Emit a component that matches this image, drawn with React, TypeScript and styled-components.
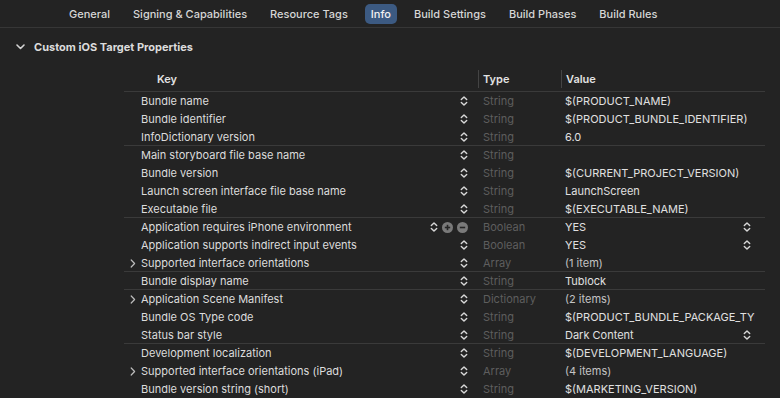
import React from "react";
import styled, { createGlobalStyle } from "styled-components";

const Global = createGlobalStyle`
  html, body { margin: 0; padding: 0; background: #232323; }
  body { font-family: Inter, "Noto Sans", sans-serif; -webkit-font-smoothing: antialiased; }
`;

const Page = styled.div`
  width: 780px;
  height: 398px;
  background: #232323;
  overflow: hidden;
  color: #dedede;
`;

const TabBar = styled.div`
  height: 28px;
  border-bottom: 1px solid #363636;
  display: flex;
  align-items: center;
  gap: 11px;
  padding-left: 63px;
  box-sizing: border-box;
`;

const Tab = styled.div<{ $active?: boolean }>`
  font-size: 11px;
  font-weight: 500;
  line-height: 20px;
  padding: 0 6px;
  border-radius: 5px;
  color: ${(p) => (p.$active ? "#f2f2f2" : "#d6d6d6")};
  background: ${(p) => (p.$active ? "#3c5a82" : "transparent")};
`;

const SectionHeader = styled.div`
  display: flex;
  align-items: center;
  height: 20px;
  margin-top: 9px;
  padding-left: 16px;
  gap: 9px;
  font-size: 11px;
  font-weight: 700;
  color: #dcdcdc;
`;

const Table = styled.div`
  margin-left: 124px;
  width: 641px;
  margin-top: 9px;
`;

const HeaderRow = styled.div`
  display: grid;
  grid-template-columns: 354px 83px 204px;
  height: 26px;
  align-items: center;
  border-bottom: 1px solid #3a3a3a;
  box-sizing: border-box;
  font-size: 11px;
  font-weight: 600;
  color: #e2e2e2;
`;

const HeadCell = styled.div<{ $pad: number; $sep?: boolean }>`
  padding-left: ${(p) => p.$pad}px;
  height: 18px;
  line-height: 18px;
  border-left: ${(p) => (p.$sep ? "1px solid #444" : "none")};
  box-sizing: border-box;
`;

const Row = styled.div<{ $line?: boolean }>`
  display: grid;
  grid-template-columns: 354px 83px 204px;
  height: 18px;
  align-items: center;
  font-size: 11px;
  box-sizing: border-box;
  border-bottom: ${(p) => (p.$line ? "1px solid #3a3a3a" : "none")};
`;

const KeyCell = styled.div`
  position: relative;
  display: flex;
  align-items: center;
  height: 18px;
  padding-left: 17px;
  padding-right: 10px;
  color: #dcdcdc;
`;

const KeyText = styled.span`
  flex: 1;
  white-space: nowrap;
  overflow: hidden;
`;

const Disclosure = styled.span`
  position: absolute;
  left: 6px;
  top: 0;
  height: 18px;
  display: flex;
  align-items: center;
`;

const Controls = styled.span`
  display: flex;
  align-items: center;
  gap: 4px;
`;

const TypeCell = styled.div`
  padding-left: 5px;
  color: #5e5e5e;
  white-space: nowrap;
`;

const ValueCell = styled.div<{ $dim?: boolean }>`
  display: flex;
  align-items: center;
  padding-left: 4px;
  padding-right: 10px;
  color: ${(p) => (p.$dim ? "#c4c4c4" : "#e0e0e0")};
  overflow: hidden;
`;

const ValueText = styled.span`
  flex: 1;
  white-space: nowrap;
  overflow: hidden;
`;

const ValueStepper = styled.span`
  margin-right: 4px;
  display: flex;
`;

const Stepper = ({ color = "#d8d8d8" }: { color?: string }) => (
  <svg width="8" height="12" viewBox="0 0 8 12" style={{ display: "block" }}>
    <path d="M1.3 4.6 L4 1.9 L6.7 4.6" fill="none" stroke={color} strokeWidth="1.4" strokeLinecap="round" strokeLinejoin="round" />
    <path d="M1.3 7.4 L4 10.1 L6.7 7.4" fill="none" stroke={color} strokeWidth="1.4" strokeLinecap="round" strokeLinejoin="round" />
  </svg>
);

const Circle = ({ kind }: { kind: "plus" | "minus" }) => (
  <svg width="11" height="11" viewBox="0 0 11 11" style={{ display: "block" }}>
    <circle cx="5.5" cy="5.5" r="5.5" fill="#7a7a7a" />
    <path d="M2.8 5.5 H8.2" stroke="#262626" strokeWidth="1.6" />
    {kind === "plus" && <path d="M5.5 2.8 V8.2" stroke="#262626" strokeWidth="1.6" />}
  </svg>
);

const Chevron = ({ dir }: { dir: "down" | "right" }) =>
  dir === "down" ? (
    <svg width="9" height="6" viewBox="0 0 9 6" style={{ display: "block" }}>
      <path d="M1 1 L4.5 4.5 L8 1" fill="none" stroke="#d4d4d4" strokeWidth="1.6" strokeLinecap="round" strokeLinejoin="round" />
    </svg>
  ) : (
    <svg width="6" height="9" viewBox="0 0 6 9" style={{ display: "block" }}>
      <path d="M1.2 1 L4.6 4.5 L1.2 8" fill="none" stroke="#bdbdbd" strokeWidth="1.2" strokeLinecap="round" strokeLinejoin="round" />
    </svg>
  );

type Item = {
  key: string;
  type: string;
  value: string;
  line?: boolean;
  expand?: boolean;
  hover?: boolean;
  valueStepper?: boolean;
  dim?: boolean;
};

const items: Item[] = [
  { key: "Bundle name", type: "String", value: "$(PRODUCT_NAME)" },
  { key: "Bundle identifier", type: "String", value: "$(PRODUCT_BUNDLE_IDENTIFIER)" },
  { key: "InfoDictionary version", type: "String", value: "6.0", line: true },
  { key: "Main storyboard file base name", type: "String", value: "" },
  { key: "Bundle version", type: "String", value: "$(CURRENT_PROJECT_VERSION)" },
  { key: "Launch screen interface file base name", type: "String", value: "LaunchScreen" },
  { key: "Executable file", type: "String", value: "$(EXECUTABLE_NAME)", line: true },
  { key: "Application requires iPhone environment", type: "Boolean", value: "YES", hover: true, valueStepper: true },
  { key: "Application supports indirect input events", type: "Boolean", value: "YES", valueStepper: true },
  { key: "Supported interface orientations", type: "Array", value: "(1 item)", expand: true, line: true, dim: true },
  { key: "Bundle display name", type: "String", value: "Tublock", line: true },
  { key: "Application Scene Manifest", type: "Dictionary", value: "(2 items)", expand: true, dim: true },
  { key: "Bundle OS Type code", type: "String", value: "$(PRODUCT_BUNDLE_PACKAGE_TYPE)" },
  { key: "Status bar style", type: "String", value: "Dark Content", valueStepper: true, line: true },
  { key: "Development localization", type: "String", value: "$(DEVELOPMENT_LANGUAGE)" },
  { key: "Supported interface orientations (iPad)", type: "Array", value: "(4 items)", expand: true, dim: true },
  { key: "Bundle version string (short)", type: "String", value: "$(MARKETING_VERSION)" },
];

const tabs = ["General", "Signing & Capabilities", "Resource Tags", "Info", "Build Settings", "Build Phases", "Build Rules"];

export default function App() {
  return (
    <Page>
      <Global />
      <TabBar>
        {tabs.map((t) => (
          <Tab key={t} $active={t === "Info"}>
            {t}
          </Tab>
        ))}
      </TabBar>
      <SectionHeader>
        <Chevron dir="down" />
        <span>Custom iOS Target Properties</span>
      </SectionHeader>
      <Table>
        <HeaderRow>
          <HeadCell $pad={33}>Key</HeadCell>
          <HeadCell $pad={4} $sep>Type</HeadCell>
          <HeadCell $pad={4} $sep>Value</HeadCell>
        </HeaderRow>
        {items.map((it) => (
          <Row key={it.key} $line={it.line}>
            <KeyCell>
              {it.expand && (
                <Disclosure>
                  <Chevron dir="right" />
                </Disclosure>
              )}
              <KeyText>{it.key}</KeyText>
              <Controls>
                <Stepper />
                {it.hover && <Circle kind="plus" />}
                {it.hover && <Circle kind="minus" />}
              </Controls>
            </KeyCell>
            <TypeCell>{it.type}</TypeCell>
            <ValueCell $dim={it.dim}>
              <ValueText>{it.value}</ValueText>
              {it.valueStepper && (
                <ValueStepper>
                  <Stepper />
                </ValueStepper>
              )}
            </ValueCell>
          </Row>
        ))}
      </Table>
    </Page>
  );
}
